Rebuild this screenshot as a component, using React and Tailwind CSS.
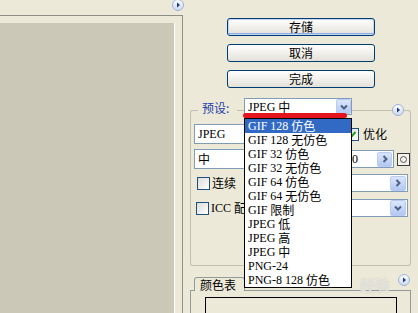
import React from "react"

const CJK = /([\u3000-\u9fff\uff00-\uffef]+)/
const cjkFont = "font-['Noto_Sans_CJK_SC',sans-serif]"
const latinFont = "font-['Liberation_Serif',serif]"

// 宋体风格：西文衬线，中文全角
function Txt({ s }) {
    return s.split(CJK).filter(Boolean).map((p, i) =>
        CJK.test(p) ? (
            <span key={i} className={`${cjkFont} text-[12px] whitespace-pre`}>{p}</span>
        ) : (
            <span key={i} className={`${latinFont} text-[12px] whitespace-pre`}>{p}</span>
        )
    )
}

function MenuDot({ className = "" }) {
    return (
        <svg width="12" height="12" viewBox="0 0 12 12" className={`shrink-0 ${className}`}>
            <defs>
                <linearGradient id="dotg" x1="0" y1="0" x2="0" y2="1">
                    <stop offset="0" stopColor="#FFFFFF" />
                    <stop offset="1" stopColor="#CBD8F4" />
                </linearGradient>
            </defs>
            <circle cx="6" cy="6" r="5.5" fill="url(#dotg)" stroke="#9FB1D8" />
            <path d="M5 3.5 L8 6 L5 8.5 Z" fill="#1A3986" />
        </svg>
    )
}

function ArrowBtn({ dir = "down", className = "" }) {
    return (
        <div className={`shrink-0 rounded-[2px] border border-[#BACBF2] bg-linear-to-b from-[#DCE6FC] to-[#B3C7F3] flex items-center justify-center ${className}`}>
            <svg width="10" height="10" viewBox="0 0 10 10">
                {dir === "down" ? (
                    <path d="M2 3.5 L5 6.5 L8 3.5" fill="none" stroke="#4D6185" strokeWidth="2" />
                ) : (
                    <path d="M3.5 2 L6.5 5 L3.5 8" fill="none" stroke="#4D6185" strokeWidth="2" />
                )}
            </svg>
        </div>
    )
}

function CheckBox({ checked }) {
    return (
        <div className="w-[13px] h-[13px] shrink-0 border border-[#1C5180] bg-linear-to-br from-[#DCDCD7] to-white flex items-center justify-center">
            {checked && (
                <svg width="9" height="9" viewBox="0 0 9 9">
                    <path d="M1.5 4.5 L3.5 6.5 L7.5 2" fill="none" stroke="#21A121" strokeWidth="2" />
                </svg>
            )}
        </div>
    )
}

function XpButton({ label, isDefault }) {
    return (
        <div
            className={`w-[148px] h-[18px] rounded-[3px] border border-[#003C74] bg-linear-to-b from-white to-[#E3E1D8] flex items-center justify-center text-[12px] ${cjkFont} ${
                isDefault ? "shadow-[inset_0_0_0_1px_#C3D5F5,inset_0_-2px_0_0_#8DACE6]" : ""
            }`}
        >
            {label}
        </div>
    )
}

const presets = [
    "GIF 128 仿色",
    "GIF 128 无仿色",
    "GIF 32 仿色",
    "GIF 32 无仿色",
    "GIF 64 仿色",
    "GIF 64 无仿色",
    "GIF 限制",
    "JPEG 低",
    "JPEG 高",
    "JPEG 中",
    "PNG-24",
    "PNG-8 128 仿色",
]

export default function App() {
    const line = "bg-[#C3C0B1]"

    return (
        <div className={`relative w-[418px] h-[313px] overflow-hidden bg-[#ECE9D8] flex text-black leading-none ${cjkFont}`}>
            {/* 预览区 */}
            <div className="w-[183px] shrink-0 flex flex-col">
                <div className="h-[15px] flex justify-end items-start">
                    <MenuDot className="-mt-[1px] -mr-[1px]" />
                </div>
                <div className="flex-1 flex border-t border-r border-[#8E8E86] pt-[7px] pr-[7px]">
                    <div className="flex-1 bg-[#CBC8B8] border-r border-white" />
                </div>
            </div>

            {/* 右侧面板 */}
            <div className="flex-1 flex flex-col px-[7px] pt-[18px]">
                <div className="flex flex-col items-center gap-[8px] pl-[1px]">
                    <XpButton label="存储" isDefault />
                    <XpButton label="取消" />
                    <XpButton label="完成" />
                </div>

                {/* 预设 分组 */}
                <div className="mt-[10px] flex h-[18px] items-start">
                    <div className="w-[8px] h-[6px] mt-[12px] border-t border-l border-[#C3C0B1] rounded-tl-[3px]" />
                    <span className="ml-[4px] w-[30px] mt-[4px] text-[12px] text-[#1C3FA8]">预设:</span>
                    <div className="w-[5px]" />
                    <div className={`w-[7px] h-px mt-[12px] ${line}`} />
                    <div className="w-[108px] h-[17px] border border-[#7F9DB9] bg-white flex items-center pl-[3px]">
                        <span className="flex-1 flex items-center">
                            <Txt s="JPEG 中" />
                        </span>
                        <ArrowBtn className="w-[15px] h-[15px]" />
                    </div>
                    <div className={`flex-1 h-px mt-[12px] ${line}`} />
                    <MenuDot className="mt-[6px]" />
                    <div className={`w-[3px] h-px mt-[12px] ${line}`} />
                    <div className="w-[4px] h-[6px] mt-[12px] border-t border-r border-[#C3C0B1] rounded-tr-[3px]" />
                </div>
                <div className="h-[150px] border-l border-r border-b border-[#C3C0B1] rounded-b-[3px] pt-[8px] flex flex-col text-[12px]">
                    {/* 格式 / 优化 */}
                    <div className="h-[20px] flex items-center pl-[3px]">
                        <div className="w-[148px] h-[20px] border border-[#7F9DB9] bg-white flex items-center pl-[3px]">
                            <span className="flex-1 flex items-center"><Txt s="JPEG" /></span>
                            <ArrowBtn className="w-[16px] h-[16px] mr-px" />
                        </div>
                        <div className="ml-[4px]"><CheckBox checked /></div>
                        <span className="ml-[4px] text-[12px]">优化</span>
                    </div>

                    {/* 中 / 品质 */}
                    <div className="mt-[5px] h-[20px] flex items-center pl-[3px]">
                        <div className="w-[114px] h-[20px] border border-[#7F9DB9] bg-white flex items-center pl-[3px]">
                            <span className="flex-1">中</span>
                            <ArrowBtn className="w-[16px] h-[16px] mr-px" />
                        </div>
                        <div className="ml-[35px] w-[51px] h-[18px] border border-[#7F9DB9] bg-white flex items-center pl-[8px]">
                            <span className="flex-1 flex items-center"><Txt s="0" /></span>
                            <ArrowBtn dir="right" className="w-[15px] h-[15px] mr-px" />
                        </div>
                        <div className="ml-[3px] w-[13px] h-[13px] border border-[#3B3B3B] bg-[#F4F3EE] flex items-center justify-center">
                            <div className="w-[7px] h-[7px] rounded-full border border-[#555]" />
                        </div>
                    </div>

                    {/* 连续 */}
                    <div className="mt-[5px] h-[18px] flex items-center pl-[6px] pr-[2px]">
                        <CheckBox />
                        <span className="ml-[2px]">连续</span>
                        <div className="ml-[80px] flex-1 h-[18px] border border-[#7F9DB9] bg-white flex items-center justify-end">
                            <ArrowBtn dir="right" className="w-[16px] h-[15px] mr-px" />
                        </div>
                    </div>

                    {/* ICC */}
                    <div className="mt-[7px] h-[18px] flex items-center pl-[5px] pr-[2px]">
                        <CheckBox />
                        <span className="ml-[2px] flex items-center"><Txt s="ICC 配" /></span>
                        <div className="ml-[70px] flex-1 h-[18px] border border-[#7F9DB9] bg-white flex items-center justify-end">
                            <ArrowBtn className="w-[16px] h-[16px] mr-px" />
                        </div>
                    </div>
                </div>

                {/* 颜色表 */}
                <div className="mt-[11px] h-[13px] flex items-start pl-[4px]">
                    <div className="relative z-10 w-[51px] h-[14px] border-t border-l border-r border-[#919B9C] rounded-t-[3px] bg-[#ECE9D8] pl-[5px] pt-[1px] text-[12px]">
                        颜色表
                    </div>
                    <div className="flex-1" />
                    <MenuDot className="-mt-[3px] mr-px" />
                </div>
                <div className="flex-1 flex border-t border-l border-r border-[#919B9C] pt-[6px] pl-[14px] pr-[13px]">
                    <div className="flex-1 border-t border-l border-r border-black" />
                </div>
            </div>

            {/* 预设下拉列表 */}
            <div className="absolute left-[244px] top-[118px] w-[108px] z-20 border border-black bg-white flex flex-col">
                {presets.map((p, i) => (
                    <div
                        key={p}
                        className={`h-[14px] flex items-center pl-[3px] ${i === 0 ? "bg-[#316AC5] text-white" : "text-black"}`}
                    >
                        <Txt s={p} />
                    </div>
                ))}
            </div>

            {/* 红色标记 */}
            <div className="absolute left-[243px] top-[113px] w-[104px] h-[5px] z-30 rounded-full bg-[#E3141B]" />

            {/* 水印 */}
            <div className="absolute left-[360px] top-[276px] z-40 pointer-events-none text-white/60 [text-shadow:0_0_1px_#B8B6AB]">
                <span className={`${cjkFont} font-bold text-[15px]`}>经验</span>
            </div>
        </div>
    )
}
